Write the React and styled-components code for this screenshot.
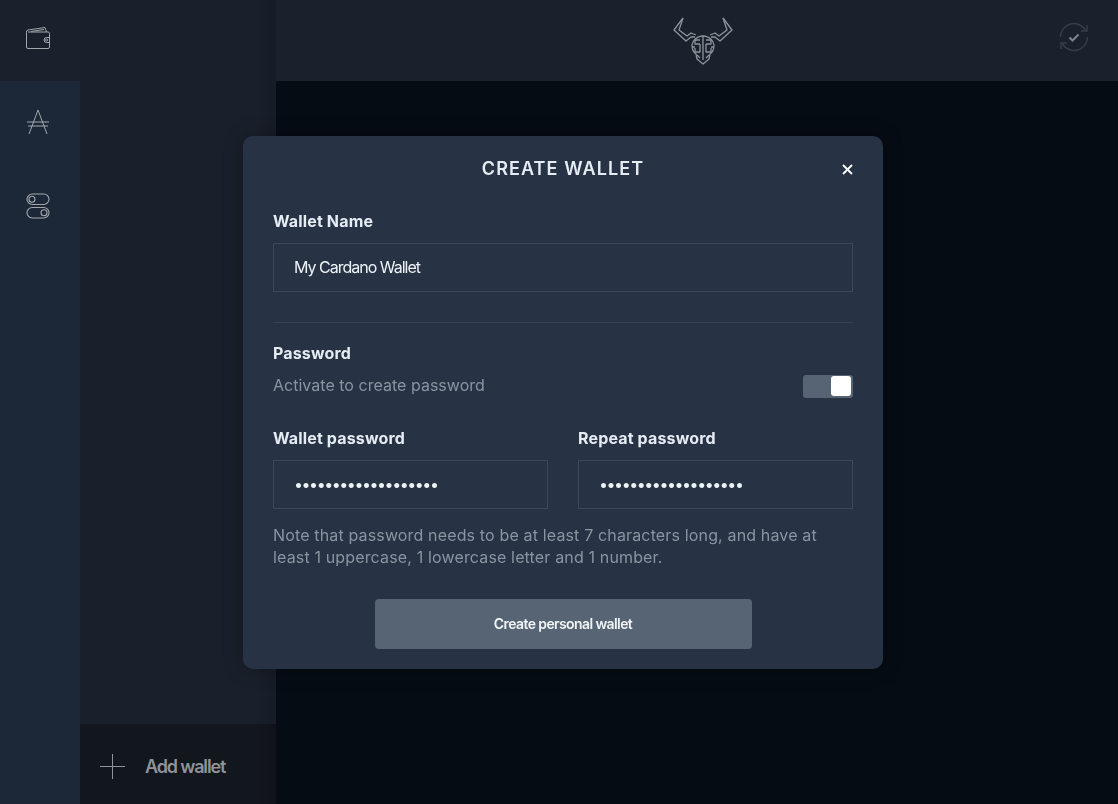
import React, { useState } from "react";
import styled, { createGlobalStyle } from "styled-components";

const GlobalStyle = createGlobalStyle`
  html, body {
    margin: 0;
    padding: 0;
    height: 100%;
    background: #060c13;
    font-family: "Inter", "Liberation Sans", sans-serif;
  }
  * { box-sizing: border-box; }
`;

const Page = styled.div`
  display: grid;
  grid-template-columns: 80px 196px 1fr;
  height: 100vh;
  overflow: hidden;
`;

const Rail = styled.nav`
  display: flex;
  flex-direction: column;
  background: #1c2837;
`;

const RailItem = styled.button`
  display: flex;
  align-items: center;
  justify-content: center;
  width: 80px;
  height: ${(p) => (p.$tall ? "88px" : "81px")};
  padding: ${(p) => (p.$active ? "0 4px 5px 0" : "0 4px 0 0")};
  border: 0;
  background: ${(p) => (p.$active ? "#1a202c" : "transparent")};
  color: #a3a7ad;
`;

const WalletPanel = styled.aside`
  display: flex;
  flex-direction: column;
  background: linear-gradient(90deg, #1a202b 90%, #161b25 100%);
`;

const PanelBody = styled.div`
  flex: 1;
`;

const AddWallet = styled.button`
  display: flex;
  align-items: center;
  gap: 20px;
  height: 80px;
  padding: 4px 0 0 20px;
  border: 0;
  background: linear-gradient(90deg, #12161d 90%, #0f1319 100%);
  color: #8f939a;
  font: 600 18px "Inter", sans-serif;
  letter-spacing: -1.15px;
`;

const Main = styled.main`
  display: flex;
  flex-direction: column;
  background: #060c13;
`;

const TopBar = styled.header`
  display: grid;
  grid-template-columns: 1fr auto 1fr;
  align-items: center;
  height: 81px;
  padding: 0 28px 0 40px;
  background: #1a202c;
`;

const Logo = styled.div`
  grid-column: 2;
  display: flex;
  color: #8f949b;
`;

const SyncSlot = styled.div`
  grid-column: 3;
  display: flex;
  justify-content: flex-end;
  padding-bottom: 7px;
`;

const Overlay = styled.div`
  position: fixed;
  inset: 0;
  display: flex;
  align-items: center;
  justify-content: center;
  padding-left: 8px;
`;

const Modal = styled.section`
  width: 640px;
  height: 533px;
  padding: 0 30px;
  border-radius: 10px;
  background: #273345;
  box-shadow: 0 0 20px rgba(4, 8, 14, 0.3);
  color: #e8eef5;
`;

const ModalHead = styled.header`
  position: relative;
  display: flex;
  align-items: center;
  justify-content: center;
  height: 66px;
`;

const Title = styled.h2`
  margin: 0;
  font-size: 18px;
  font-weight: 600;
  letter-spacing: 1.1px;
  color: #e6ecf3;
`;

const Close = styled.button`
  position: absolute;
  right: 0;
  top: 28px;
  display: flex;
  padding: 0;
  border: 0;
  background: none;
  color: #fff;
`;

const Label = styled.label`
  display: block;
  height: 19px;
  margin-bottom: ${(p) => (p.$tight ? "12px" : "13px")};
  font-size: 16px;
  line-height: 19px;
  font-weight: 700;
  letter-spacing: 0.15px;
  color: #e6ecf3;
`;

const Field = styled.input`
  display: block;
  width: 100%;
  height: 49px;
  padding: 0 20px;
  border: 1px solid #3c4759;
  border-radius: 0;
  outline: 0;
  background: transparent;
  color: #eef3f8;
  font: 400 16px "Inter", sans-serif;
  letter-spacing: ${(p) => (p.type === "password" ? "-1.45px" : "-1px")};
`;

const NameGroup = styled.div`
  padding-top: 10px;
`;

const Divider = styled.hr`
  height: 1px;
  margin: 30px 0 21px;
  border: 0;
  background: #364254;
`;

const ToggleRow = styled.div`
  display: flex;
  align-items: center;
  justify-content: space-between;
  height: 23px;
  margin-top: -1px;
`;

const Hint = styled.span`
  margin-top: -2px;
  font-size: 16px;
  letter-spacing: 0.02px;
  color: #8a94a1;
`;

const Toggle = styled.button`
  display: flex;
  justify-content: flex-end;
  align-items: center;
  width: 50px;
  height: 23px;
  padding: 0 2px;
  border: 0;
  border-radius: 3px;
  background: #566473;
`;

const Knob = styled.span`
  width: 20px;
  height: 20px;
  border-radius: 3px;
  background: #fff;
`;

const PasswordGrid = styled.div`
  display: grid;
  grid-template-columns: 1fr 1fr;
  gap: 30px;
  margin-top: 31px;
`;

const Note = styled.p`
  margin: 15px 0 0;
  font-size: 16px;
  line-height: 22px;
  letter-spacing: 0.15px;
  color: #8a94a1;
`;

const Submit = styled.button`
  display: block;
  width: 377px;
  height: 50px;
  margin: 31px auto 0;
  border: 0;
  border-radius: 4px;
  background: #566473;
  color: #f1f4f7;
  font: 600 14px "Inter", sans-serif;
  letter-spacing: -0.6px;
`;

const WalletIcon = () => (
  <svg width="26" height="24" viewBox="0 0 26 24" fill="none" stroke="currentColor" strokeWidth="1">
    <path d="M1.5 6.5v14.5a1.5 1.5 0 0 0 1.5 1.5h20a1.5 1.5 0 0 0 1.5-1.5V7.5A1.5 1.5 0 0 0 23 6H3" />
    <path d="M1.5 6.5A2 2 0 0 1 3 4l17-2.5 1.5 4.5" />
    <path d="M6 5.5 19 3.5" />
    <path d="M25 11.5h-3.5a2.5 2.5 0 0 0 0 5H25" />
    <circle cx="21.5" cy="14" r="1" />
  </svg>
);

const AdaIcon = () => (
  <svg width="24" height="26" viewBox="0 0 24 26" fill="none" stroke="currentColor" strokeWidth="1">
    <path d="M3 25 12 1l9 24" />
    <path d="M1 13h22M2 17h20" />
  </svg>
);

const SettingsIcon = () => (
  <svg width="24" height="26" viewBox="0 0 24 26" fill="none" stroke="currentColor" strokeWidth="1.1">
    <rect x="1" y="1" width="22" height="10.5" rx="5.25" />
    <circle cx="6" cy="6.25" r="3" />
    <rect x="1" y="14.5" width="22" height="10.5" rx="5.25" />
    <circle cx="18" cy="19.75" r="3" />
  </svg>
);

const BullLogo = () => (
  <svg width="60" height="48" viewBox="0 0 60 48" fill="none" stroke="currentColor" strokeWidth="1.3" strokeLinejoin="round">
    <path d="M10 1 1 13l12 11 5-4h4" />
    <path d="M10 1 6 13l8 6 4-3 5 2" />
    <path d="M50 1l9 12-12 11-5-4h-4" />
    <path d="M50 1l4 12-8 6-4-3-5 2" />
    <path d="M29 19a11 11 0 0 0-10 9c0 4 1 7 4 9l1 5 6 5 6-5 1-5c3-2 4-5 4-9a11 11 0 0 0-10-9z" />
    <path d="M30 19v24" />
    <path d="M27 23h-5v4h5M22 31v4h5v-8M19 30h3" />
    <path d="M33 23h5v4h-5M38 31v4h-5v-8M41 30h-3" />
    <path d="M24 38l3 3M36 38l-3 3" />
  </svg>
);

const SyncIcon = () => (
  <svg width="32" height="32" viewBox="0 0 32 32" fill="none" stroke="#363e4a" strokeWidth="1.5">
    <path d="M2.5 16A13.5 13.5 0 0 1 27.5 9" />
    <path d="M29 4v6h-6" />
    <path d="M29.5 16A13.5 13.5 0 0 1 4.5 23" />
    <path d="M3 28v-6h6" />
    <path d="M11.5 16.5l3 3 6-6" stroke="#7d838c" strokeWidth="2" />
  </svg>
);

const CloseIcon = () => (
  <svg width="11" height="11" viewBox="0 0 11 11" stroke="currentColor" strokeWidth="1.8">
    <path d="M1 1l9 9M10 1l-9 9" />
  </svg>
);

const PlusIcon = () => (
  <svg width="25" height="25" viewBox="0 0 25 25" stroke="#8f939a" strokeWidth="1">
    <path d="M12.5 0v25M0 12.5h25" />
  </svg>
);

export default function App() {
  const [name, setName] = useState("My Cardano Wallet");
  const [password, setPassword] = useState("1234567890123456789");
  const [repeat, setRepeat] = useState("1234567890123456789");

  return (
    <>
      <GlobalStyle />
      <Page>
        <Rail>
          <RailItem $active><WalletIcon /></RailItem>
          <RailItem><AdaIcon /></RailItem>
          <RailItem $tall><SettingsIcon /></RailItem>
        </Rail>
        <WalletPanel>
          <PanelBody />
          <AddWallet>
            <PlusIcon />
            Add wallet
          </AddWallet>
        </WalletPanel>
        <Main>
          <TopBar>
            <Logo><BullLogo /></Logo>
            <SyncSlot><SyncIcon /></SyncSlot>
          </TopBar>
        </Main>
      </Page>
      <Overlay>
        <Modal>
          <ModalHead>
            <Title>CREATE WALLET</Title>
            <Close aria-label="Close"><CloseIcon /></Close>
          </ModalHead>
          <NameGroup>
            <Label $tight>Wallet Name</Label>
            <Field value={name} onChange={(e) => setName(e.target.value)} />
          </NameGroup>
          <Divider />
          <Label>Password</Label>
          <ToggleRow>
            <Hint>Activate to create password</Hint>
            <Toggle aria-label="Activate password"><Knob /></Toggle>
          </ToggleRow>
          <PasswordGrid>
            <div>
              <Label $tight>Wallet password</Label>
              <Field type="password" value={password} onChange={(e) => setPassword(e.target.value)} />
            </div>
            <div>
              <Label $tight>Repeat password</Label>
              <Field type="password" value={repeat} onChange={(e) => setRepeat(e.target.value)} />
            </div>
          </PasswordGrid>
          <Note>
            Note that password needs to be at least 7 characters long, and have at least 1 uppercase, 1 lowercase letter and 1 number.
          </Note>
          <Submit>Create personal wallet</Submit>
        </Modal>
      </Overlay>
    </>
  );
}
